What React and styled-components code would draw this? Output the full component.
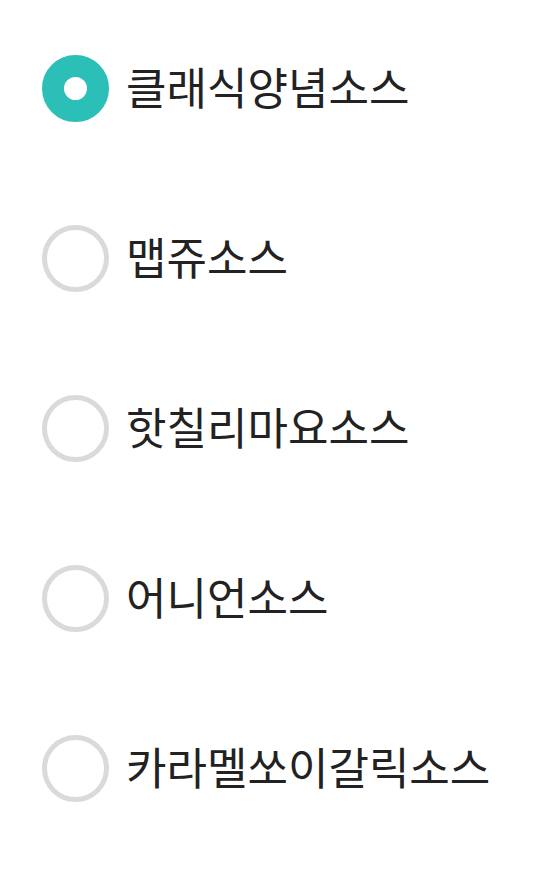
import React, { useState } from "react";
import styled, { createGlobalStyle } from "styled-components";

const GlobalStyle = createGlobalStyle`
  html, body {
    margin: 0;
    padding: 0;
    background: #ffffff;
  }
`;

const SAUCES = [
  "클래식양념소스",
  "맵쥬소스",
  "핫칠리마요소스",
  "어니언소스",
  "카라멜쏘이갈릭소스",
];

const App = () => {
  const [selected, setSelected] = useState(0);

  return (
    <>
      <GlobalStyle />
      <OptionList>
        {SAUCES.map((name, i) => (
          <OptionRow key={name} onClick={() => setSelected(i)}>
            <Radio $checked={selected === i} />
            <Label>{name}</Label>
          </OptionRow>
        ))}
      </OptionList>
    </>
  );
};

const OptionList = styled.ul`
  list-style: none;
  margin: 0;
  padding: 3px 0 0 42px;
  display: flex;
  flex-direction: column;
`;

const OptionRow = styled.li`
  height: 170px;
  display: flex;
  align-items: center;
  gap: 17px;
  cursor: pointer;
`;

const Radio = styled.span`
  box-sizing: border-box;
  flex: none;
  width: 67px;
  height: 67px;
  border-radius: 50%;
  border: ${({ $checked }) =>
    $checked ? "22px solid #2bbfb7" : "5px solid #dadada"};
  background: #ffffff;
`;

const Label = styled.span`
  font-family: "Noto Sans CJK KR", "Noto Sans", sans-serif;
  font-size: 44px;
  color: #222222;
  line-height: 1;
  padding-bottom: 4px;
`;

export default App;
